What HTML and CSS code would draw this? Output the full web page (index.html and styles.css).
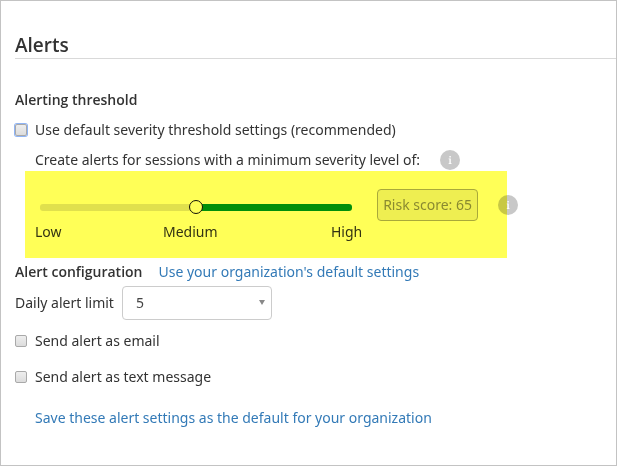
FILE: index.html
```html
<!DOCTYPE html>
<html lang="en">
<head>
<meta charset="utf-8">
<title>Alerts</title>
<link rel="stylesheet" href="styles.css">
</head>
<body>
<main class="page">
  <h1 class="title">Alerts</h1>

  <h2 class="heading">Alerting threshold</h2>
  <label class="check"><input type="checkbox" class="box box-focus"><span>Use default severity threshold settings (recommended)</span></label>
  <div class="hint">
    <label for="severity">Create alerts for sessions with a minimum severity level of:</label>
    <svg class="info" viewBox="0 0 20 20" role="img" aria-label="Info"><circle cx="10" cy="10" r="10" fill="#c8c8c8"/><path d="M9.4 6h1.4v1.4H9.4zM8.6 8.4h2.2v4.8h.8v.8H8.6v-.8h.8V9.2h-.8z" fill="#fff"/></svg>
  </div>

  <section class="threshold">
    <div class="scale">
      <input type="range" id="severity" class="slider" min="0" max="100" value="50">
      <div class="levels"><span>Low</span><span>Medium</span><span class="level-high">High</span></div>
    </div>
    <button type="button" class="score">Risk score: 65</button>
    <svg class="info info-score" viewBox="0 0 20 20" role="img" aria-label="Info"><circle cx="10" cy="10" r="10" fill="#c8c8c8"/><path d="M9.4 6h1.4v1.4H9.4zM8.6 8.4h2.2v4.8h.8v.8H8.6v-.8h.8V9.2h-.8z" fill="#fff"/></svg>
  </section>

  <div class="config">
    <h2 class="config-heading">Alert configuration</h2>
    <a href="#defaults">Use your organization's default settings</a>
  </div>
  <div class="limit">
    <label for="limit">Daily alert limit</label>
    <div class="select-wrap">
      <select id="limit" class="select"><option>5</option><option>10</option><option>20</option></select>
    </div>
  </div>
  <label class="check"><input type="checkbox" class="box"><span>Send alert as email</span></label>
  <label class="check check-text"><input type="checkbox" class="box"><span>Send alert as text message</span></label>
  <a class="save" href="#save">Save these alert settings as the default for your organization</a>
</main>
</body>
</html>
```
FILE: styles.css
```css
* {
  box-sizing: border-box;
}

body {
  margin: 0;
  background: #fff;
  color: #333;
  font: 14px/20px "Noto Sans", "Open Sans", sans-serif;
}

.page {
  min-height: 100vh;
  padding: 32px 0 30px 14px;
  border: 1px solid #c3c3c3;
}

.title {
  margin: 0 0 31px;
  border-bottom: 1px solid #d9d9d9;
  font-family: "Open Sans", "Noto Sans", sans-serif;
  font-size: 19px;
  line-height: 25px;
  font-weight: 600;
}

.heading,
.config-heading {
  margin: 0;
  font-family: "Open Sans", "Noto Sans", sans-serif;
  font-size: 14px;
  line-height: 20px;
  font-weight: 600;
}

a {
  color: #337ab7;
  text-decoration: none;
}

.check {
  display: flex;
  align-items: center;
  gap: 8px;
  margin-top: 10px;
}

.check-text {
  margin-top: 16px;
}

.box {
  appearance: none;
  flex: none;
  width: 12px;
  height: 12px;
  margin: 0;
  border: 1px solid #a9a9a9;
  border-radius: 2px;
  background: linear-gradient(#eee, #dcdcdc);
}

.box-focus {
  box-shadow: 0 0 0 1px #8fb4f5;
}

.hint {
  display: flex;
  align-items: center;
  gap: 20px;
  margin: 10px 0 0 20px;
}

.info {
  flex: none;
  width: 20px;
  height: 20px;
}

.threshold {
  position: relative;
  display: flex;
  align-items: flex-start;
  max-width: 493px;
  margin: 1px 0 4px 10px;
  padding: 18px 0 16px 10px;
}

.threshold::after {
  content: "";
  position: absolute;
  inset: 0 11px 0 0;
  background: #ffff57;
  mix-blend-mode: multiply;
  pointer-events: none;
}

.scale {
  flex: 1;
  margin: 11px 15px 0 0;
}

.slider {
  appearance: none;
  display: block;
  width: calc(100% - 15px);
  height: 14px;
  margin: 0 10px 8px 5px;
  background: none;
}

.slider::-webkit-slider-runnable-track {
  height: 7px;
  border-radius: 3px;
  background: linear-gradient(90deg, #e0e0e0 50%, #008f1f 50%);
}

.slider::-webkit-slider-thumb {
  appearance: none;
  width: 14px;
  height: 14px;
  margin-top: -4px;
  border: 1px solid #111;
  border-radius: 50%;
  background: #fff;
}

.levels {
  display: grid;
  grid-template-columns: 128px auto 1fr;
}

.level-high {
  text-align: right;
}

.score {
  height: 32px;
  padding: 0 5px;
  border: 1px solid #a9a9a9;
  border-radius: 4px;
  background: #eee;
  color: #8a8a8a;
  font: inherit;
}

.info-score {
  margin: 6px 0 0 20px;
}

.config {
  display: flex;
  gap: 16px;
}

.limit {
  display: flex;
  align-items: center;
  gap: 8px;
  margin: 4px 0 11px;
}

.select-wrap {
  position: relative;
  width: 150px;
}

.select-wrap::after {
  content: "";
  position: absolute;
  right: 7px;
  top: 14px;
  border: 3px solid transparent;
  border-top: 5px solid #888;
  border-bottom: 0;
  pointer-events: none;
}

.select {
  appearance: none;
  display: block;
  width: 100%;
  height: 34px;
  padding: 0 13px;
  border: 1px solid #ccc;
  border-radius: 4px;
  background: #fff;
  color: #444;
  font: inherit;
}

.save {
  display: block;
  margin: 21px 0 0 20px;
}
```
